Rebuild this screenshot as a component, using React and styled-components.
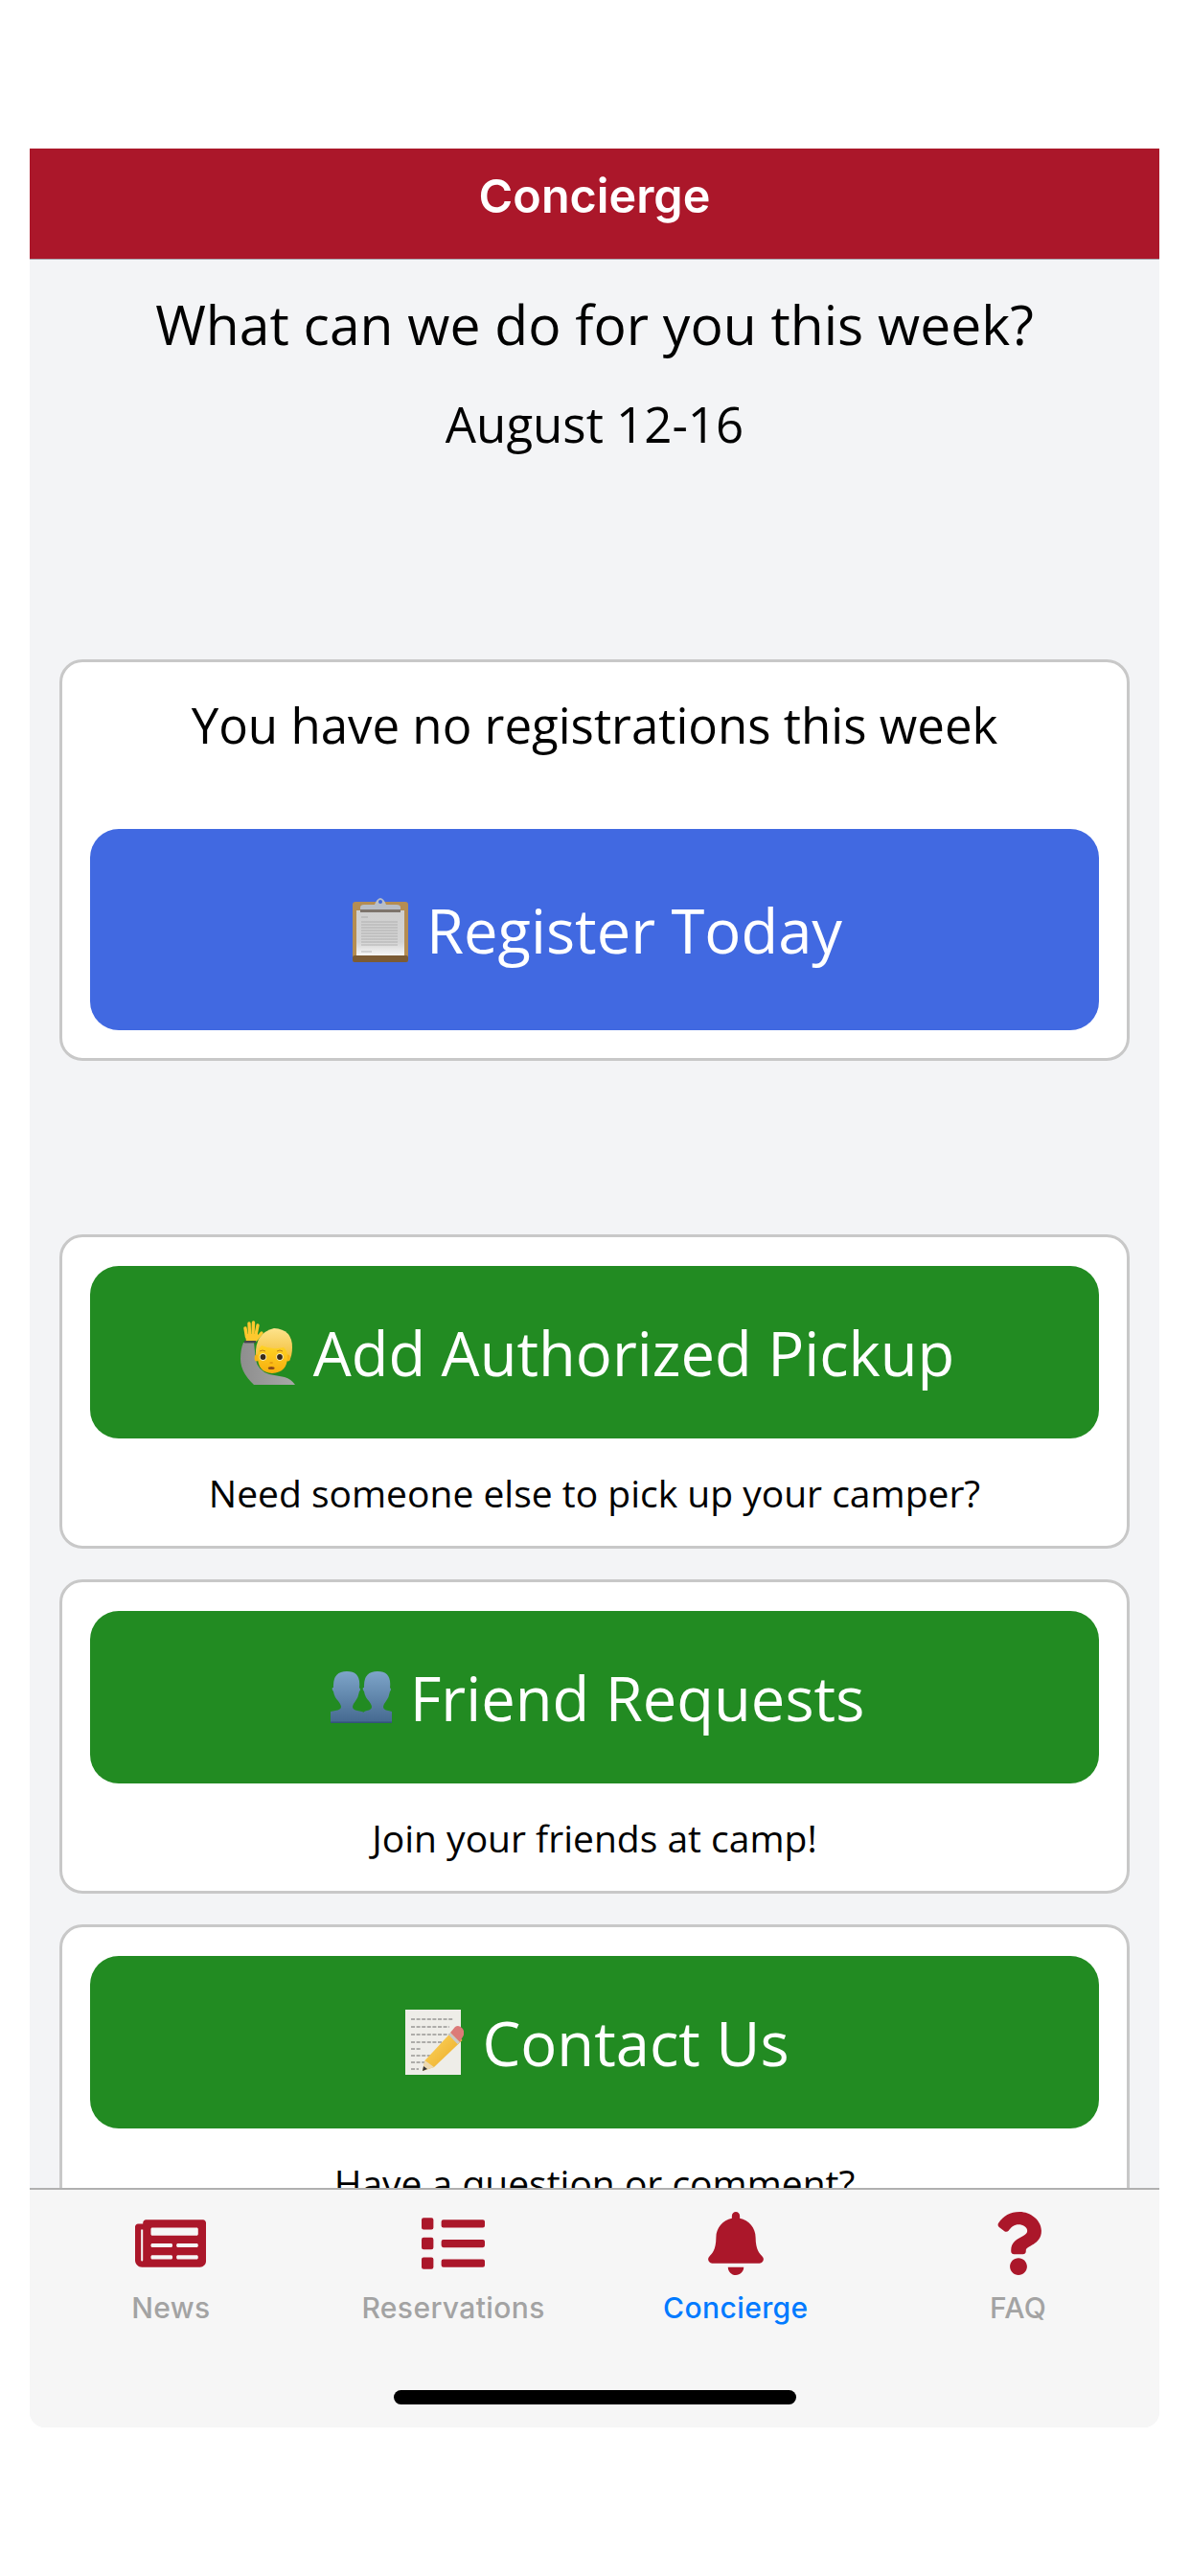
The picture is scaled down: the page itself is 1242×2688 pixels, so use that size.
import React from "react";
import styled, { createGlobalStyle } from "styled-components";
import { FaNewspaper, FaList, FaBell, FaQuestion } from "react-icons/fa";

const red = "#ab172a";

const GlobalStyle = createGlobalStyle`
  html, body {
    margin: 0;
    padding: 0;
    background: #fff;
  }
`;

const Page = styled.div`
  width: 1242px;
  height: 2688px;
  box-sizing: border-box;
  padding: 155px 32px 155px 31px;
  background: #fff;
  font-family: "Open Sans", sans-serif;
  overflow: hidden;
`;

const Frame = styled.div`
  height: 2378px;
  display: flex;
  flex-direction: column;
  background: #f3f4f6;
  border-radius: 0 0 16px 16px;
  overflow: hidden;
`;

const Header = styled.div`
  flex: none;
  height: 115px;
  display: flex;
  align-items: center;
  justify-content: center;
  background: ${red};
  border-bottom: 1px solid #a7a7ae;
  color: #fff;
  font-family: Inter, sans-serif;
  font-size: 48.5px;
  font-weight: 600;
`;

const HeaderText = styled.span`
  margin-bottom: 16px;
`;

const Content = styled.div`
  flex: 1;
  min-height: 0;
  overflow: hidden;
  padding: 33px 31px 0;
`;

const Title = styled.div`
  font-size: 57px;
  line-height: 68px;
  text-align: center;
  color: #000;
`;

const DateLine = styled.div`
  margin-top: 40px;
  margin-bottom: 216px;
  font-size: 51px;
  line-height: 60px;
  text-align: center;
  color: #000;
`;

const Card = styled.div`
  box-sizing: border-box;
  background: #fff;
  border: 3px solid #c8c8c8;
  border-radius: 24px;
  padding: 30px 29px 29px;
  margin-top: ${(p) => p.$gap || 32}px;
`;

const Notice = styled.div`
  font-size: 51px;
  line-height: 70px;
  text-align: center;
  color: #000;
  margin-bottom: 74px;
`;

const ActionButton = styled.div`
  height: ${(p) => p.$height}px;
  box-sizing: border-box;
  padding-left: 6px;
  display: flex;
  align-items: center;
  justify-content: center;
  gap: 19px;
  border-radius: 30px;
  background: ${(p) => p.$color};
  color: #fff;
  font-size: 63.3px;
`;

const Caption = styled.div`
  margin-top: 31px;
  font-size: 39px;
  line-height: 52px;
  text-align: center;
  color: #000;
`;

const TabBar = styled.div`
  flex: none;
  height: 250px;
  box-sizing: border-box;
  display: flex;
  flex-direction: column;
  padding-top: 23px;
  background: #f6f6f6;
  border-top: 2px solid #b0b0b0;
`;

const TabRow = styled.div`
  display: grid;
  grid-template-columns: repeat(4, 1fr);
`;

const Tab = styled.div`
  display: flex;
  flex-direction: column;
  align-items: center;
  color: ${red};
`;

const TabIcon = styled.div`
  height: 66px;
  display: flex;
  align-items: center;
  justify-content: center;
`;

const TabLabel = styled.div`
  margin-top: 16px;
  font-family: Inter, sans-serif;
  font-size: 30px;
  line-height: 36px;
  font-weight: 500;
  letter-spacing: 0.4px;
  color: ${(p) => (p.$active ? "#007aff" : "#a3a3a3")};
`;

const HomeBar = styled.div`
  width: 420px;
  height: 15px;
  margin: auto auto 24px;
  background: #000;
  border-radius: 8px;
`;

const Emoji = styled.svg`
  flex: none;
  display: block;
`;

const ClipboardEmoji = () => (
  <Emoji width="58" height="68" viewBox="0 0 58 68">
    <defs>
      <linearGradient id="paper" x1="0" y1="0" x2="0" y2="1">
        <stop offset="0" stopColor="#cfcfcf" />
        <stop offset="0.7" stopColor="#d4d4d4" />
        <stop offset="1" stopColor="#f6f6f6" />
      </linearGradient>
    </defs>
    <rect x="0" y="5" width="58" height="63" rx="3" fill="#b58d52" />
    <rect x="0" y="61" width="58" height="7" rx="2" fill="#7b5b35" />
    <rect x="4" y="14" width="50" height="47" fill="url(#paper)" />
    <g stroke="#a2a2a2" strokeWidth="0.7">
      {[26, 29, 32, 35, 38, 41, 44, 47, 50].map((y) => (
        <line key={y} x1="9" y1={y} x2="47" y2={y} />
      ))}
      <line x1="9" y1="21" x2="16" y2="21" />
      <line x1="9" y1="57" x2="20" y2="57" />
    </g>
    <path d="M8 13 V11 Q8 8 12 8 H23 Q25 2 29 1 Q33 2 35 8 H46 Q50 8 50 11 V13 Z" fill="#b9bec6" />
    <rect x="8" y="13" width="42" height="3" fill="#7d746c" />
    <circle cx="29" cy="5" r="2" fill="#3f68d8" />
  </Emoji>
);

const PersonEmoji = () => (
  <Emoji width="57" height="67" viewBox="0 0 57 67">
    <defs>
      <linearGradient id="shirt" x1="0" y1="0" x2="1" y2="0">
        <stop offset="0" stopColor="#8e8e8e" />
        <stop offset="1" stopColor="#a8a8a8" />
      </linearGradient>
      <linearGradient id="face" x1="0" y1="0" x2="0" y2="1">
        <stop offset="0" stopColor="#ffd324" />
        <stop offset="1" stopColor="#f7ae0e" />
      </linearGradient>
      <linearGradient id="hair" x1="0" y1="0" x2="0" y2="1">
        <stop offset="0" stopColor="#fde38c" />
        <stop offset="1" stopColor="#f2bb32" />
      </linearGradient>
    </defs>
    <path d="M3 23 H14 L16 41 Q18 52 30 56 L46 59 Q53 61 57 67 H14 Q0 54 0 40 Q0 30 3 23 Z" fill="url(#shirt)" />
    <g stroke="#fdc82e" strokeWidth="3.4" strokeLinecap="round">
      <line x1="5" y1="8" x2="6.5" y2="17" />
      <line x1="9" y1="3" x2="9.5" y2="14" />
      <line x1="13.5" y1="2" x2="13" y2="14" />
      <line x1="18" y1="5" x2="16" y2="15" />
      <line x1="22" y1="13" x2="16" y2="20" />
    </g>
    <path d="M5 14 H18 L19 19 L15 22 H6 Z" fill="#fdc82e" />
    <rect x="4" y="21" width="12" height="2.4" fill="#45464c" />
    <path d="M16 36 Q15 13 35 8 Q54 9 54 28 Q54 36 51 42 H19 Z" fill="url(#hair)" />
    <ellipse cx="16.8" cy="39" rx="2.2" ry="3.6" fill="#f5b414" />
    <ellipse cx="49.5" cy="39" rx="2.2" ry="3.6" fill="#f5b414" />
    <path d="M18 38 Q18 29 22 26 Q33 31 45 28 Q49 31 49 38 Q49 54 33 55 Q18 54 18 38 Z" fill="url(#face)" />
    <path d="M20 32 Q23 30 26 32 M38 32 Q41 30 44 32" stroke="#b5761a" strokeWidth="0.9" fill="none" />
    <circle cx="23.5" cy="38" r="3.7" fill="#fff6d8" />
    <circle cx="41" cy="38" r="3.7" fill="#fff6d8" />
    <circle cx="23.5" cy="38" r="2.9" fill="#3a2a18" />
    <circle cx="41" cy="38" r="2.9" fill="#3a2a18" />
    <ellipse cx="32.2" cy="44" rx="1.8" ry="1" fill="#e59a10" />
    <ellipse cx="32.2" cy="49.5" rx="3.4" ry="1.6" fill="#8b4a1a" />
  </Emoji>
);

const BustsEmoji = () => (
  <Emoji width="64" height="54" viewBox="0 0 64 54">
    <defs>
      <linearGradient id="bust" x1="0" y1="0" x2="0" y2="1">
        <stop offset="0" stopColor="#7ea5c9" />
        <stop offset="1" stopColor="#44688f" />
      </linearGradient>
    </defs>
    <path d="M34 54 V44 Q34 42 38 41 Q43 40 43 37 Q43 35 40 31 Q36 27 35 21 Q33 19 34 17 L35 17 Q34 0 49 0 Q64 0 62 17 Q64 19 62 21 Q61 27 58 31 Q55 35 55 37 Q55 40 60 41 L64 42 V54 Z" fill="url(#bust)" />
    <path d="M0 54 V42 L5 41 Q11 40 11 37 Q11 35 8 31 Q4 27 3 21 Q1 19 2 17 L3 17 Q2 0 17 0 Q32 0 30 17 Q32 19 30 21 Q29 27 26 31 Q23 35 23 37 Q23 40 28 41 Q40 42 43 54 Z" fill="url(#bust)" />
    <rect y="52.5" width="64" height="1.5" fill="#34557a" />
  </Emoji>
);

const MemoEmoji = () => (
  <Emoji width="61" height="68" viewBox="0 0 61 68">
    <defs>
      <linearGradient id="pencil" x1="0" y1="0" x2="1" y2="1">
        <stop offset="0" stopColor="#ffdc6a" />
        <stop offset="1" stopColor="#e9a41c" />
      </linearGradient>
    </defs>
    <rect x="0" y="0" width="58" height="68" fill="#eeede8" />
    <g stroke="#5e5e5e" strokeWidth="0.9" strokeDasharray="4 1.6">
      <line x1="6" y1="10" x2="50" y2="10" />
      <line x1="6" y1="18" x2="46" y2="18" />
      <line x1="6" y1="26" x2="46" y2="26" />
      <line x1="6" y1="34" x2="40" y2="34" />
      <line x1="6" y1="41" x2="16" y2="41" />
      <line x1="6" y1="48" x2="26" y2="48" />
      <line x1="6" y1="55" x2="20" y2="55" />
      <line x1="6" y1="62" x2="14" y2="62" />
    </g>
    <path d="M18 64 L20.5 53 L49.5 22 L59.5 32 L30 60 Z" fill="url(#pencil)" />
    <path d="M20.5 53 L30 60 L18 64 Z" fill="#ecd9b2" />
    <path d="M18 64 L19 59 L23 62 Z" fill="#333" />
    <path d="M47 24 L52 18 Q56 15 60 20 Q63 25 59 30 L57 34 Z" fill="#dc7a78" />
    <path d="M47 24 L57 34 L54.5 36 L45 26 Z" fill="#c9c9c9" />
  </Emoji>
);

const tabs = [
  { label: "News", Icon: FaNewspaper, size: 74 },
  { label: "Reservations", Icon: FaList, size: 66 },
  { label: "Concierge", Icon: FaBell, size: 66, active: true },
  { label: "FAQ", Icon: FaQuestion, size: 66 },
];

const App = () => {
  return (
    <Page>
      <GlobalStyle />
      <Frame>
        <Header>
          <HeaderText>Concierge</HeaderText>
        </Header>
        <Content>
          <Title>What can we do for you this week?</Title>
          <DateLine>August 12-16</DateLine>
          <Card $gap={1}>
            <Notice>You have no registrations this week</Notice>
            <ActionButton $height={210} $color="#4169e1">
              <ClipboardEmoji />
              Register Today
            </ActionButton>
          </Card>
          <Card $gap={181}>
            <ActionButton $height={180} $color="#228b22">
              <PersonEmoji />
              Add Authorized Pickup
            </ActionButton>
            <Caption>Need someone else to pick up your camper?</Caption>
          </Card>
          <Card>
            <ActionButton $height={180} $color="#228b22">
              <BustsEmoji />
              Friend Requests
            </ActionButton>
            <Caption>Join your friends at camp!</Caption>
          </Card>
          <Card>
            <ActionButton $height={180} $color="#228b22">
              <MemoEmoji />
              Contact Us
            </ActionButton>
            <Caption>Have a question or comment?</Caption>
          </Card>
        </Content>
        <TabBar>
          <TabRow>
            {tabs.map(({ label, Icon, size, active }) => (
              <Tab key={label}>
                <TabIcon>
                  <Icon size={size} />
                </TabIcon>
                <TabLabel $active={active}>{label}</TabLabel>
              </Tab>
            ))}
          </TabRow>
          <HomeBar />
        </TabBar>
      </Frame>
    </Page>
  );
};

export default App;
